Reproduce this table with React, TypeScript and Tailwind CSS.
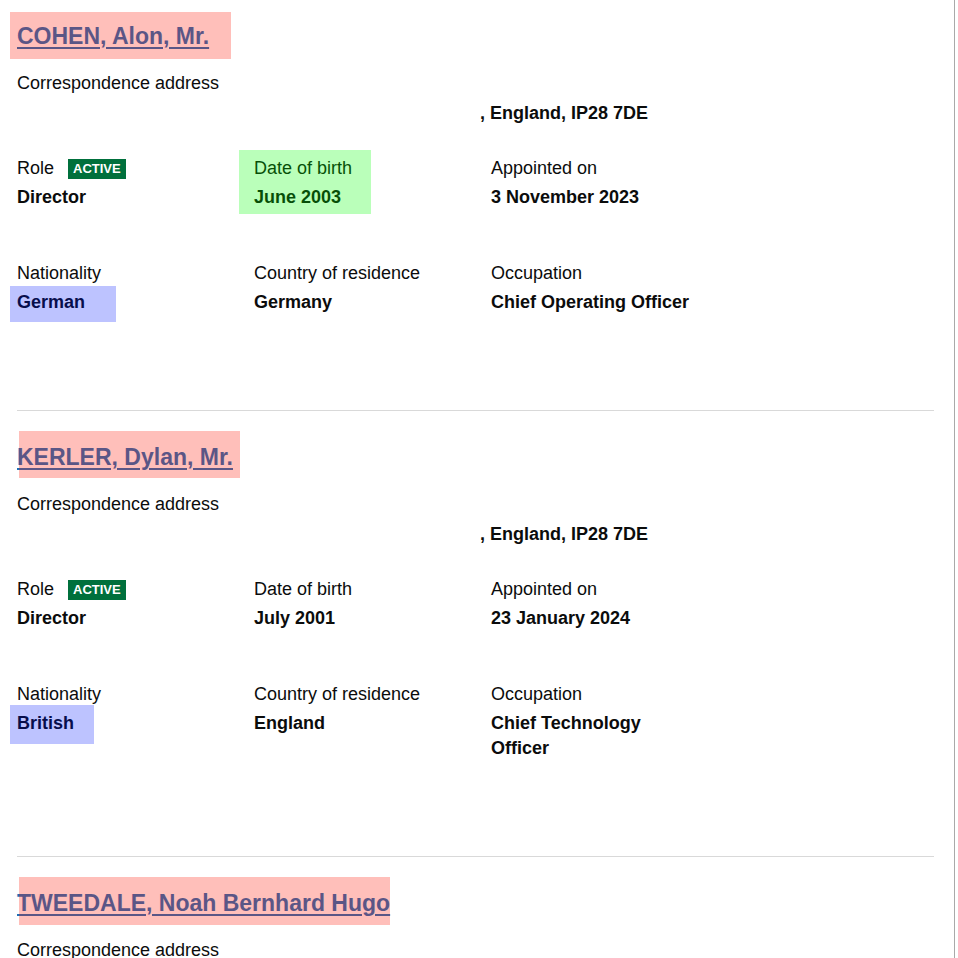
import type { ReactNode } from 'react';

type Officer = {
  name: string;
  address: string;
  role: string;
  dob: string;
  appointed: string;
  nationality: string;
  residence: string;
  occupation: string;
};

const OFFICERS: Officer[] = [
  {
    name: 'COHEN, Alon, Mr.',
    address: ', England, IP28 7DE',
    role: 'Director',
    dob: 'June 2003',
    appointed: '3 November 2023',
    nationality: 'German',
    residence: 'Germany',
    occupation: 'Chief Operating Officer',
  },
  {
    name: 'KERLER, Dylan, Mr.',
    address: ', England, IP28 7DE',
    role: 'Director',
    dob: 'July 2001',
    appointed: '23 January 2024',
    nationality: 'British',
    residence: 'England',
    occupation: 'Chief Technology Officer',
  },
  {
    name: 'TWEEDALE, Noah Bernhard Hugo',
    address: ', England, IP28 7DE',
    role: 'Director',
    dob: 'March 2002',
    appointed: '23 January 2024',
    nationality: 'British',
    residence: 'England',
    occupation: 'Chief Executive Officer',
  },
];

// highlight boxes drawn over the page (annotation layer)
const NAME_BOX = [
  'left-[-7px] top-[-9px] w-[221px] h-[47px]',
  'left-[2px] top-[-11px] w-[221px] h-[47px]',
  'left-[2px] top-[-11px] w-[371px] h-[48px]',
];
const NAT_BOX = [
  'left-[-7px] top-[-4px] w-[106px] h-[36px]',
  'left-[-7px] top-[-6px] w-[84px] h-[39px]',
  'left-[-7px] top-[-6px] w-[84px] h-[39px]',
];

function Cell({ label, children, tag }: { label: string; children: ReactNode; tag?: boolean }) {
  return (
    <div className="pr-[30px]">
      <div className="flex items-center mb-[4px] leading-[25px]">
        <span>{label}</span>
        {tag && (
          <span className="ml-[14px] bg-[#00703c] text-white font-bold text-[13px] leading-[20px] px-[5px] uppercase">
            Active
          </span>
        )}
      </div>
      <div className="font-bold leading-[25px]">{children}</div>
    </div>
  );
}

function OfficerBlock({ officer, index }: { officer: Officer; index: number }) {
  return (
    <div>
      <h2 className="relative text-[23px] font-bold leading-[30px]">
        <a
          href="#"
          className="text-[#1d70b8] underline decoration-2 underline-offset-[3px]"
        >
          {officer.name}
        </a>
        <span className={`absolute bg-[rgba(255,20,0,0.27)] pointer-events-none ${NAME_BOX[index]}`} />
      </h2>

      <div className="mt-[20px] leading-[25px] mb-[5px]">Correspondence address</div>
      <div className="pl-[463px] font-bold leading-[25px]">{officer.address}</div>

      <div className="mt-[30px] grid grid-cols-[237px_237px_237px]">
        <Cell label="Role" tag>
          {officer.role}
        </Cell>
        <div className="relative">
          <Cell label="Date of birth">{officer.dob}</Cell>
          {index === 0 && (
            <span className="absolute left-[-15px] top-[-6px] w-[132px] h-[64px] bg-[rgba(0,255,0,0.27)]" />
          )}
        </div>
        <Cell label="Appointed on">{officer.appointed}</Cell>
      </div>

      <div className="mt-[51px] grid grid-cols-[237px_237px_237px]">
        <div className="pr-[30px]">
          <div className="mb-[4px] leading-[25px]">Nationality</div>
          <div className="relative font-bold leading-[25px]">
            {officer.nationality}
            <span className={`absolute bg-[rgba(0,25,255,0.26)] ${NAT_BOX[index]}`} />
          </div>
        </div>
        <Cell label="Country of residence">{officer.residence}</Cell>
        <Cell label="Occupation">{officer.occupation}</Cell>
      </div>

      <div className="mt-[95px] mb-[31px] h-px bg-[#d9d9d9]" />
    </div>
  );
}

export default function App() {
  return (
    <div className="w-[955px] h-[958px] overflow-hidden border-r border-[#a9a9a9] bg-white pl-[17px] pr-[20px] pt-[21px] text-[18px] text-[#0b0c0c] font-['Liberation_Sans',Arial,sans-serif]">
      {OFFICERS.map((o, i) => (
        <OfficerBlock key={o.name} officer={o} index={i} />
      ))}
    </div>
  );
}
